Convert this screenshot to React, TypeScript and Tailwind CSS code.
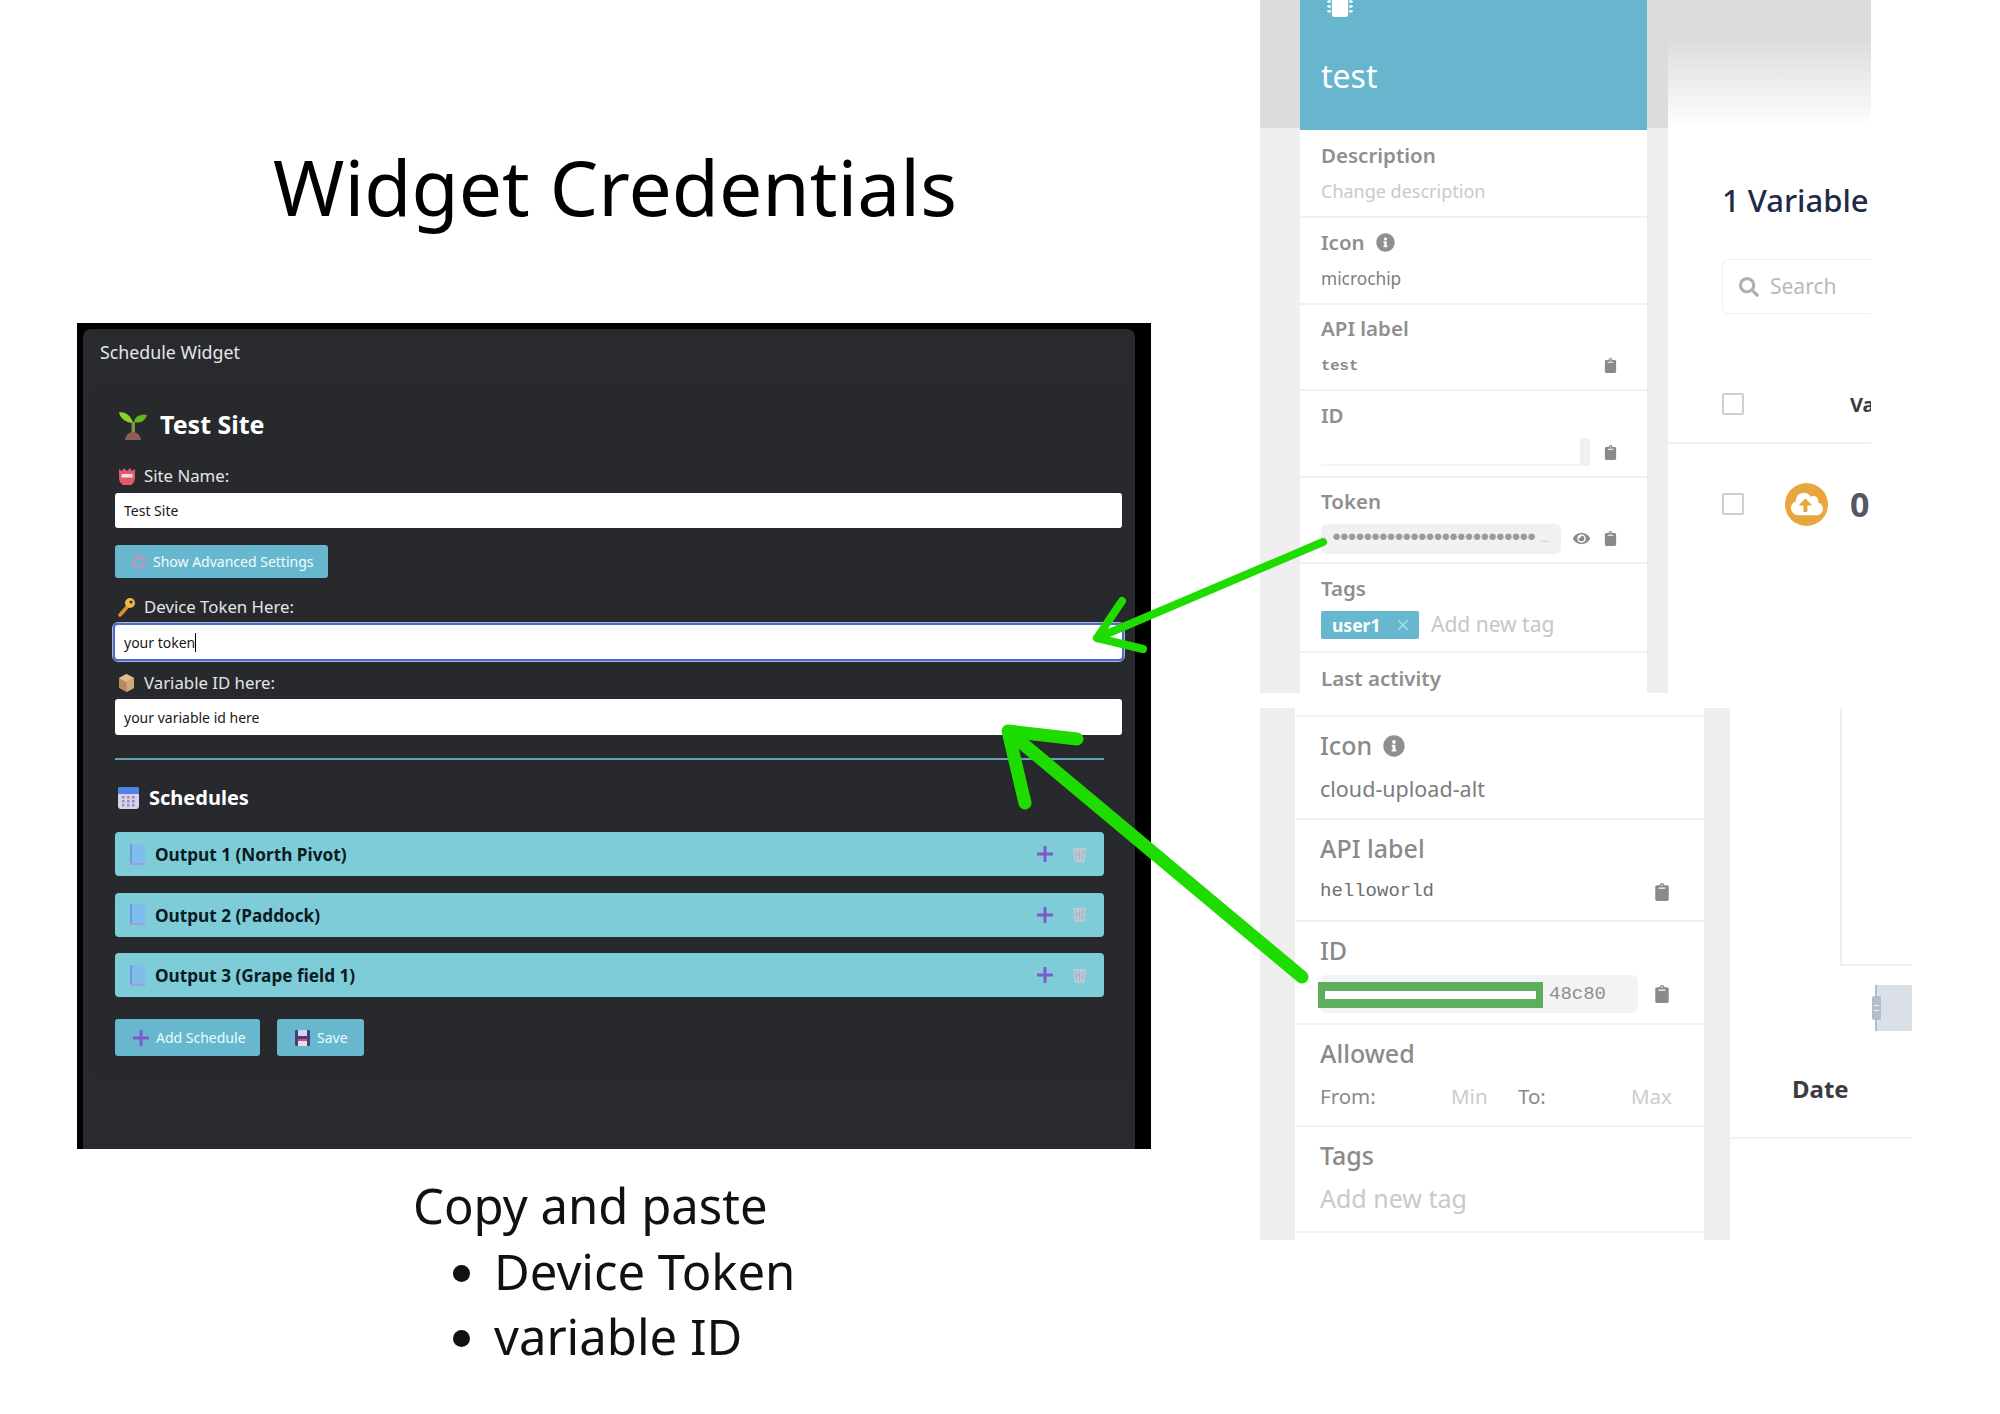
import { ReactNode } from "react";
import { FaClipboard, FaCloudUploadAlt, FaEye, FaInfoCircle, FaMicrochip, FaSearch } from "react-icons/fa";
import { X } from "lucide-react";

const Sprout = () => (
  <svg width="30" height="32" viewBox="0 0 30 32">
    <path d="M13.500 30V13h3.500v17z" fill="#8a8f4a" />
    <path d="M15 14C13 6 7 3 1 3c1 7 8 11 14 11z" fill="#86d42c" />
    <path d="M16 13c1-6 6-8 13-7-2 6-7 9-13 7z" fill="#63b81f" />
    <path d="M7 31c1-6 5-8 8-8s7 2 8 8z" fill="#8d5f54" />
  </svg>
);

const NameBadge = () => (
  <svg width="18" height="18" viewBox="0 0 18 18">
    <path d="M1 2l3 2 2-3 3 3 3-3 2 3 3-2v9a7 7 0 0 1-16 0z" fill="#e2596f" />
    <rect x="3.500" y="7" width="11" height="3.500" fill="#f6dfe2" />
  </svg>
);

const KeyIcon = () => (
  <svg width="18" height="20" viewBox="0 0 18 20">
    <path d="M2 18l8-9" stroke="#d9912f" strokeWidth="3.500" strokeLinecap="round" />
    <circle cx="12" cy="6" r="5" fill="#f0b648" />
    <circle cx="13" cy="5" r="1.500" fill="#282a2e" />
  </svg>
);

const PackageIcon = () => (
  <svg width="17" height="20" viewBox="0 0 17 20">
    <path d="M8.500 1L16 5v10l-7.500 4L1 15V5z" fill="#b88a5e" />
    <path d="M8.500 9L16 5v10l-7.500 4z" fill="#d3a878" />
    <path d="M1 5l7.500-4L16 5 8.500 9z" fill="#e0bd94" />
  </svg>
);

const CalendarIcon = () => (
  <svg width="21" height="22" viewBox="0 0 21 22">
    <rect width="21" height="22" rx="3" fill="#d9d2e9" />
    <path d="M0 3a3 3 0 0 1 3-3h15a3 3 0 0 1 3 3v4H0z" fill="#4f83e8" />
    {[5, 10, 15].map((x) =>
      [10, 14, 18].map((y) => <rect key={`${x}-${y}`} x={x - 1} y={y - 1} width="2.500" height="2.500" fill={x === 15 && y === 14 ? "#4f9de8" : "#9a90b5"} />),
    )}
  </svg>
);

const BookIcon = () => (
  <svg width="15" height="21" viewBox="0 0 15 21">
    <rect width="15" height="21" fill="#7fbdec" />
    <rect width="2" height="21" fill="#6f9adc" />
    <rect y="19" width="15" height="2" fill="#a39cdc" />
  </svg>
);

const GearIcon = () => (
  <svg width="16" height="16" viewBox="0 0 16 16">
    <circle cx="8" cy="8" r="5" fill="none" stroke="#a79ec4" strokeWidth="3.500" />
    <circle cx="8" cy="8" r="7" fill="none" stroke="#a79ec4" strokeWidth="2" strokeDasharray="2.500 3" />
  </svg>
);

const PurplePlus = ({ size = 16 }: { size?: number }) => (
  <svg width={size} height={size} viewBox="0 0 16 16">
    <path d="M8 1v14M1 8h14" stroke="#7a5cc8" strokeWidth="3" strokeLinecap="round" />
  </svg>
);

const TrashIcon = () => (
  <svg width="15" height="15" viewBox="0 0 15 15">
    <path d="M1 1h13l-1.500 14h-10z" fill="#bccad6" />
    <path d="M3 3l2 10M7.500 3v10M12 3l-2 10M3 9l9-5M3 5l9 6" stroke="#a4aebd" strokeWidth="0.700" />
  </svg>
);

const FloppyIcon = () => (
  <svg width="15" height="16" viewBox="0 0 15 16">
    <rect width="15" height="16" rx="1" fill="#47407a" />
    <rect x="3" y="0" width="9" height="6" fill="#d8d4ea" />
    <rect x="3" y="9" width="9" height="7" fill="#e4dfee" />
    <rect x="3" y="9" width="9" height="2" fill="#e0496a" />
  </svg>
);

function FieldLabel({ icon, text }: { icon: ReactNode; text: string }) {
  return (
    <div className="flex h-[22px] items-center">
      <span className="flex w-[29px] pl-[3px]">{icon}</span>
      <span className="text-[16.800px] text-[#e4e5e6]">{text}</span>
    </div>
  );
}

function OutputRow({ name }: { name: string }) {
  return (
    <div className="flex h-[44px] items-center rounded-[4px] bg-[#7fccd9] pr-[17px] pl-[15px]">
      <BookIcon />
      <span className="ml-[10px] pt-[2px] text-[17.200px] font-bold text-[#0b1b22]">{name}</span>
      <span className="ml-auto flex items-center gap-[19px]">
        <PurplePlus />
        <TrashIcon />
      </span>
    </div>
  );
}

function WidgetPanel() {
  return (
    <div className="absolute top-[323px] left-[77px] h-[826px] w-[1074px] bg-black pt-[6px] pr-[16px] pl-[6px] font-['Noto_Sans',sans-serif]">
      <div className="flex h-full flex-col rounded-t-lg bg-[#282a2e]">
        <div className="flex h-[44px] items-center pt-[2px] pl-[17px] text-[17.800px] text-[#e6e7e8]">Schedule Widget</div>
        <div className="mt-[9px] ml-[8px] h-[698px] rounded-2xl bg-[#27292d] pt-[26px] pr-[13px] pl-[24px]">
          <div className="flex h-[34px] items-center pl-[3px]">
            <Sprout />
            <span className="ml-[12px] text-[25px] font-bold text-white">Test Site</span>
          </div>
          <div className="mt-[23px]">
            <FieldLabel icon={<NameBadge />} text="Site Name:" />
          </div>
          <div className="mt-[6px] flex h-[35px] items-center rounded-[3px] bg-white pl-[9px] text-[14px] text-[#17191c]">Test Site</div>
          <div className="mt-[17px] flex h-[33px] w-[213px] items-center rounded-[3px] bg-[#67b8cf] pl-[16px] text-[14px] text-[#f3fbfd]">
            <GearIcon />
            <span className="ml-[6px]">Show Advanced Settings</span>
          </div>
          <div className="mt-[18px]">
            <FieldLabel icon={<KeyIcon />} text="Device Token Here:" />
          </div>
          <div className="mx-[-3px] mt-[4px] rounded-[6px] border border-[#b3b7c4]">
            <div className="flex h-[38px] items-center rounded-[5px] border-2 border-[#4a6bd6] bg-white pl-[9px] text-[14px] text-[#17191c]">
              your token<span className="h-[19px] w-px bg-black" />
            </div>
          </div>
          <div className="mt-[10px]">
            <FieldLabel icon={<PackageIcon />} text="Variable ID here:" />
          </div>
          <div className="mt-[5px] flex h-[36px] items-center rounded-[3px] bg-white pl-[9px] text-[14px] text-[#17191c]">your variable id here</div>
          <div className="mr-[18px]">
            <div className="mt-[23px] h-[2px] bg-[#5aa7ae]" />
            <div className="mt-[23px] flex h-[30px] items-center pl-[3px]">
              <CalendarIcon />
              <span className="ml-[10px] text-[20px] font-bold text-white">Schedules</span>
            </div>
            <div className="mt-[19px] flex flex-col gap-[16.500px]">
              <OutputRow name="Output 1 (North Pivot)" />
              <OutputRow name="Output 2 (Paddock)" />
              <OutputRow name="Output 3 (Grape field 1)" />
            </div>
            <div className="mt-[22px] flex gap-[17px] text-[14px] text-[#eefafc]">
              <div className="flex h-[37px] w-[145px] items-center rounded-[3px] bg-[#67b8cf] pl-[18px]">
                <PurplePlus size={16} />
                <span className="ml-[7px]">Add Schedule</span>
              </div>
              <div className="flex h-[37px] w-[87px] items-center rounded-[3px] bg-[#67b8cf] pl-[18px]">
                <FloppyIcon />
                <span className="ml-[7px]">Save</span>
              </div>
            </div>
          </div>
        </div>
      </div>
    </div>
  );
}

function DeviceRow({ label, children, tall }: { label: ReactNode; children?: ReactNode; tall?: boolean }) {
  return (
    <div className={`${tall ? "h-[89px]" : "h-[86.500px]"} border-b-2 border-[#f1f1f1] pt-[12px] pr-[29px] pl-[21px]`}>
      <div className="flex h-[24px] items-center text-[20.500px] font-semibold text-[#8f8f8f]">{label}</div>
      <div className="mt-[10px] flex h-[30px] items-center">{children}</div>
    </div>
  );
}

function Clip({ size = 15 }: { size?: number }) {
  return <FaClipboard size={size} className="ml-auto text-[#8a8a8a]" />;
}

function DevicePanelTop() {
  return (
    <div className="absolute top-0 left-[1260px] flex h-[693px] w-[611px] overflow-hidden font-['Noto_Sans',sans-serif]">
      <div className="w-[40px] bg-[#efefef]">
        <div className="h-[128px] bg-[#dcdcdb]" />
      </div>
      <div className="w-[347px] bg-white">
        <div className="relative h-[130px] bg-[#67b6cd] pt-[56px] pl-[21px] text-[32px] leading-[40px] text-white">
          <FaMicrochip size={26} className="absolute top-[-9px] left-[27px] text-white" />
          test
        </div>
        <div className="h-[88px] border-b-2 border-[#f1f1f1] pt-[13px] pl-[21px]">
          <div className="flex h-[24px] items-center text-[20.500px] font-semibold text-[#8f8f8f]">Description</div>
          <div className="mt-[12px] text-[18px] leading-[24px] text-[#c9c9c9]">Change description</div>
        </div>
        <DeviceRow
          label={
            <>
              Icon <FaInfoCircle size={19} className="ml-[11px] text-[#8f8f8f]" />
            </>
          }
        >
          <span className="text-[17.300px] text-[#7d7d7d]">microchip</span>
        </DeviceRow>
        <DeviceRow label="API label">
          <span className="pt-[2px] font-['Liberation_Mono',monospace] text-[15.500px] font-bold text-[#8a8a8a]">test</span>
          <Clip />
        </DeviceRow>
        <DeviceRow label="ID">
          <div className="flex h-[28px] w-[269px] justify-end border-b-2 border-[#f5f5f5]">
            <div className="h-[28px] w-[10px] rounded-r bg-[#f0f0f0]" />
          </div>
          <Clip />
        </DeviceRow>
        <DeviceRow label="Token">
          <div className="flex h-[30px] w-[240px] items-center overflow-hidden rounded-md bg-[#f1f1f1] pl-[11px] text-[#9a9a9a]">
            <span className="font-['Liberation_Mono',monospace] text-[15px] font-bold tracking-[-1.200px] whitespace-nowrap">●●●●●●●●●●●●●●●●●●●●●●●●●●</span>
            <span className="ml-[6px] text-[10px] text-[#b5b5b5]">...</span>
          </div>
          <FaEye size={17} className="ml-[12px] text-[#8a8a8a]" />
          <Clip />
        </DeviceRow>
        <DeviceRow label="Tags" tall>
          <div className="flex h-[28px] w-[98px] items-center rounded-[2px] bg-[#67b8cf] pl-[11px] text-[17.500px] font-bold text-white">
            user1
            <X size={18} className="ml-[14px] text-[#a9dbe8]" />
          </div>
          <span className="ml-[12px] text-[21px] text-[#c6c6c6]">Add new tag</span>
        </DeviceRow>
        <div className="pt-[13px] pl-[21px] text-[20.500px] leading-[24px] font-semibold text-[#8f8f8f]">Last activity</div>
      </div>
      <div className="w-[21px] bg-[#ededed]">
        <div className="h-[128px] bg-[#dcdcdb]" />
      </div>
      <div className="relative min-w-0 flex-1 bg-white">
        <div className="h-[128px] bg-gradient-to-b from-[#dcdcdb] from-30% to-white" />
        <div className="pl-[54px]">
          <div className="mt-[52px] text-[31px] leading-[40px] font-medium whitespace-nowrap text-[#1f2a48]">1 Variable</div>
          <div className="mt-[39px] flex h-[55px] w-[200px] items-center rounded-l-md border border-[#efefef] pl-[16px] text-[21px] text-[#b9b9b9]">
            <FaSearch size={20} className="mr-[11px] text-[#b0b0b0]" />
            Search
          </div>
        </div>
        <div className="mt-[40px] flex h-[90px] border-b-2 border-[#f1f1f1] pl-[54px]">
          <span className="mt-[39px] h-[22px] w-[22px] shrink-0 rounded-[2px] border-2 border-[#cfcfcf]" />
          <span className="mt-[36px] ml-[106px] text-[20px] font-bold text-[#3c3c3c]">Va</span>
        </div>
        <div className="flex items-center pt-[38px] pl-[54px]">
          <span className="h-[22px] w-[22px] shrink-0 rounded-[2px] border-2 border-[#cfcfcf]" />
          <span className="ml-[41px] flex h-[43px] w-[43px] shrink-0 items-center justify-center rounded-full bg-[#e8a63f]">
            <FaCloudUploadAlt size={32} className="text-white" />
          </span>
          <span className="ml-[22px] text-[34px] leading-[44px] font-bold text-[#55585f]">0</span>
        </div>
      </div>
    </div>
  );
}

function VariableRow({ label, children, tall }: { label: ReactNode; children: ReactNode; tall?: boolean }) {
  return (
    <div className={`${tall ? "h-[105.500px]" : "h-[102.500px]"} border-b-2 border-[#f1f1f1] pt-[13px] pr-[33px] pl-[25px]`}>
      <div className="flex h-[32px] items-center text-[25px] font-medium text-[#8a8a8a]">{label}</div>
      <div className="mt-[11px] flex h-[32px] items-center">{children}</div>
    </div>
  );
}

function DevicePanelBottom() {
  return (
    <div className="absolute top-[708px] left-[1260px] flex h-[532px] w-[652px] overflow-hidden font-['Noto_Sans',sans-serif]">
      <div className="w-[35px] bg-[#eeeeee]" />
      <div className="w-[409px] bg-white">
        <div className="h-[9px] border-b-2 border-[#f1f1f1]" />
        <VariableRow
          label={
            <>
              Icon <FaInfoCircle size={22} className="ml-[11px] text-[#8f8f8f]" />
            </>
          }
        >
          <span className="text-[21.500px] text-[#7d7d7d]">cloud-upload-alt</span>
        </VariableRow>
        <VariableRow label="API label">
          <span className="font-['Liberation_Mono',monospace] text-[19px] text-[#6f6f6f]">helloworld</span>
          <Clip size={18} />
        </VariableRow>
        <VariableRow label="ID">
          <div className="flex h-[38px] w-[318px] items-center justify-end rounded-md bg-[#f3f3f3] pr-[32px] font-['Liberation_Mono',monospace] text-[19px] text-[#8f8f8f]">
            48c80
          </div>
          <Clip size={18} />
        </VariableRow>
        <VariableRow label="Allowed">
          <div className="grid w-full grid-cols-[131px_67px_113px_1fr] text-[20.500px]">
            <span className="text-[#8a8a8a]">From:</span>
            <span className="text-[#cccccc]">Min</span>
            <span className="text-[#8a8a8a]">To:</span>
            <span className="text-[#cccccc]">Max</span>
          </div>
        </VariableRow>
        <VariableRow label="Tags" tall>
          <span className="text-[25px] text-[#c9c9c9]">Add new tag</span>
        </VariableRow>
      </div>
      <div className="w-[26px] bg-[#eeeeee]" />
      <div className="min-w-0 flex-1 bg-white">
        <div className="ml-[110px] h-[258px] border-b-2 border-l-2 border-[#eeeeee]" />
        <div className="mt-[19px] ml-[145px] flex h-[46px] border-l-2 border-[#b4bdcc] bg-[#dbe0e8]">
          <div className="flex h-full w-[10px] items-center">
            <span className="ml-[-5px] flex h-[24px] w-[9px] flex-col justify-center gap-[4px] rounded-[2px] bg-[#b4bdcc] px-[2px]">
              <span className="h-px bg-[#eef0f4]" />
              <span className="h-px bg-[#eef0f4]" />
            </span>
          </div>
        </div>
        <div className="flex h-[108px] items-center border-b-2 border-[#f1f1f1] pt-[10px] pl-[62px] text-[24px] font-bold text-[#3a3c42]">Date</div>
      </div>
    </div>
  );
}

// green arrows and the id mask sit over everything else
function Annotations() {
  return (
    <>
      <div className="absolute top-[982px] left-[1318px] h-[26px] w-[225px] border-x-[7px] border-y-[9px] border-[#5fae5d] bg-white" />
      <svg className="absolute top-0 left-0" width="2000" height="1414" viewBox="0 0 2000 1414" fill="none">
        <g stroke="#1fdc00" strokeLinecap="round" strokeLinejoin="round">
          <g strokeWidth="8">
            <path d="M1323 542L1097 638" />
            <path d="M1122 601L1097 638L1143 649" />
          </g>
          <g strokeWidth="13">
            <path d="M1302 977L1010 733" />
            <path d="M1077 739L1008 731L1025 803" />
          </g>
        </g>
      </svg>
    </>
  );
}

export default function App() {
  return (
    <div className="relative h-[1414px] w-[2000px] overflow-hidden bg-white font-['Noto_Sans',sans-serif] text-black">
      <div className="absolute top-[132px] left-[273px] text-[76.800px] leading-[110px] whitespace-nowrap">Widget Credentials</div>

      <WidgetPanel />
      <DevicePanelTop />
      <DevicePanelBottom />

      <div className="absolute top-[1173px] left-[413px] text-[49px] leading-[65.500px] whitespace-nowrap text-[#111]">
        <div>Copy and paste</div>
        <ul className="list-disc pl-[81px]">
          <li>Device Token</li>
          <li>variable ID</li>
        </ul>
      </div>

      <Annotations />
    </div>
  );
}
